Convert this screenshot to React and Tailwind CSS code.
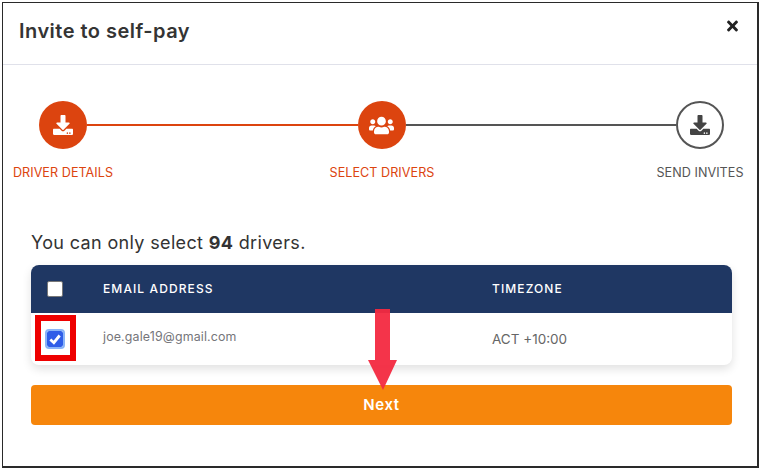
import { FaDownload, FaUsers, FaTimes } from 'react-icons/fa';

function StepCircle({ icon: Icon, done, wide }) {
  return (
    <div
      className={`w-12 h-12 rounded-full shrink-0 flex items-center justify-center ${
        done ? 'bg-[#dc440f] text-white' : 'border-2 border-[#555555] bg-white text-[#444444]'
      }`}
    >
      <Icon className={wide ? 'w-[25px] h-[25px]' : 'w-5 h-5'} />
    </div>
  );
}

function StepLabel({ done, children }) {
  return (
    <span className={`w-[104px] text-center text-[12.6px] whitespace-nowrap tracking-[0.05px] ${done ? 'text-[#dc440f]' : 'text-[#555555]'}`}>
      {children}
    </span>
  );
}

export default function App() {
  return (
    <div className="w-[763px] h-[473px] bg-white pt-[2px] pl-[2px] font-['Inter','Liberation_Sans',sans-serif]">
      <div className="relative w-[757px] h-[466px] border-r-2 border-b-2 border-t border-l border-[#2a2a2a] bg-white">
        {/* Header */}
        <div className="h-[62px] border-b border-[#e0e1ea] pl-4 pr-[17px] flex items-start justify-between">
          <h1 className="mt-[14px] text-[20px] leading-[28px] font-semibold text-[#343434] tracking-[0.48px]">Invite to self-pay</h1>
          <FaTimes className="mt-[15px] w-[15px] h-[16px] text-[#222222]" />
        </div>

        {/* Stepper */}
        <div className="pt-9 pl-9 pr-[33px] flex items-center">
          <StepCircle icon={FaDownload} done />
          <div className="flex-1 h-[2px] bg-[#dc440f]" />
          <StepCircle icon={FaUsers} done wide />
          <div className="flex-1 h-[2px] bg-[#555555]" />
          <StepCircle icon={FaDownload} />
        </div>
        <div className="mt-[15px] pl-2 pr-[5px] flex justify-between leading-[18px]">
          <StepLabel done>DRIVER DETAILS</StepLabel>
          <StepLabel done>SELECT DRIVERS</StepLabel>
          <StepLabel>SEND INVITES</StepLabel>
        </div>

        <p className="mt-[49px] ml-7 text-[18px] leading-[24px] text-[#333333] tracking-[0.35px]">
          You can only select <b className="font-bold">94</b> drivers.
        </p>

        {/* Table */}
        <div className="mt-[10px] ml-7 w-[701px] rounded-lg bg-white shadow-[0_4px_10px_rgba(0,0,0,0.12)] overflow-hidden">
          <div className="h-12 bg-[#1f3763] flex items-center text-white text-[12px] font-medium tracking-[1.1px]">
            <div className="w-[72px] pl-4 flex">
              <span className="w-[16px] h-[16px] rounded-[2px] bg-white border border-[#777777]" />
            </div>
            <div className="w-[389px]">EMAIL ADDRESS</div>
            <div>TIMEZONE</div>
          </div>
          <div className="h-[52px] flex items-center">
            <div className="w-[72px] pl-4 flex">
              <span className="w-4 h-4 rounded-[2px] bg-[#2f5de8] outline-2 outline-[#8ab4f8] flex items-center justify-center">
                <svg viewBox="0 0 12 12" className="w-[14px] h-[14px]" fill="none" stroke="white" strokeWidth="2.4">
                  <path d="M2 6.5 L5 9.2 L10 3" />
                </svg>
              </span>
            </div>
            <div className="w-[389px] text-[12.4px] text-[#75757a] -mt-1 tracking-[0.15px]">joe.gale19@gmail.com</div>
            <div className="text-[13.5px] text-[#666666]">ACT +10:00</div>
          </div>
        </div>

        {/* Next */}
        <button className="mt-5 ml-7 w-[701px] h-10 rounded bg-[#f6860c] text-white text-[15px] font-semibold tracking-[0.6px] block">
          Next
        </button>

        {/* Annotations over the screenshot */}
        <div className="absolute left-[32px] top-[312px] w-[41px] h-[46px] border-[6px] border-[#ee0000]" />
        <svg className="absolute left-[365px] top-[306px] opacity-95" width="30" height="82" viewBox="0 0 30 82">
          <path d="M7 0 H22 V51 H29 L15 81 L0 51 H7 Z" fill="#f42a41" />
        </svg>
      </div>
    </div>
  );
}
